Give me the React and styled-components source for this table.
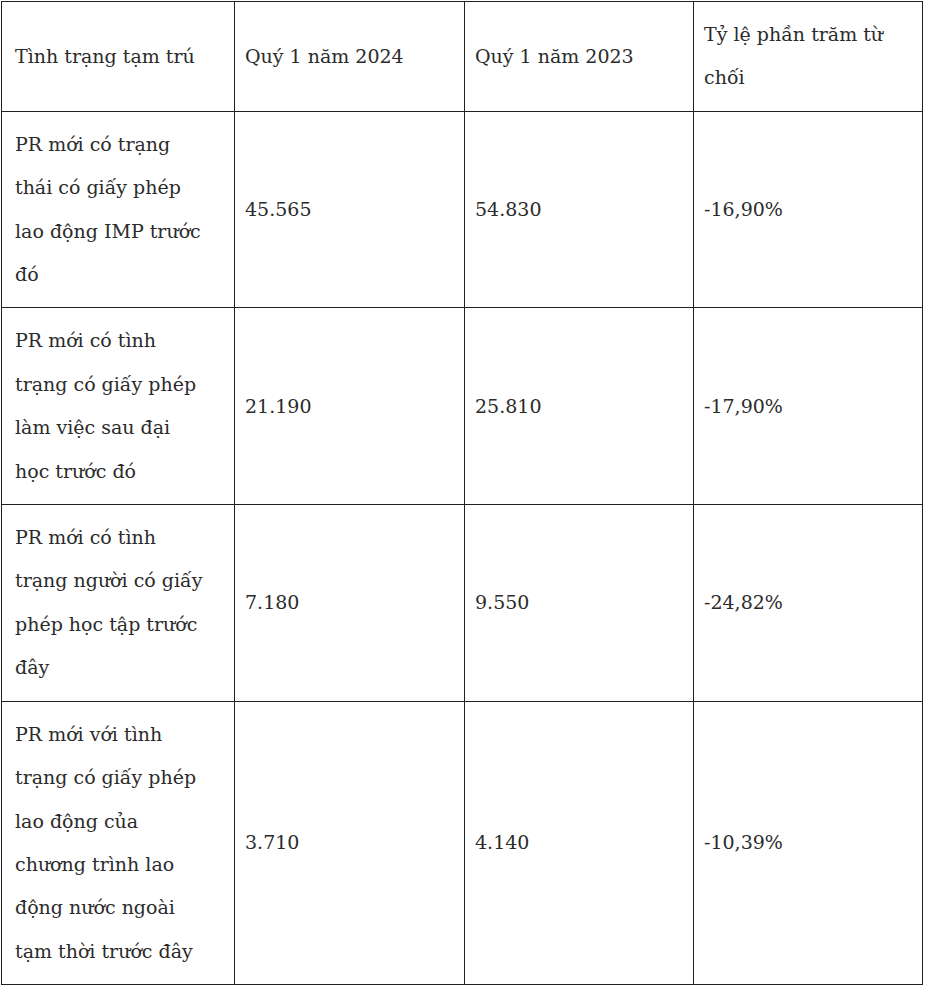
import React from 'react'
import { styled, createGlobalStyle } from 'styled-components'

const rows = [
  {
    status: ['PR mới có trạng', 'thái có giấy phép', 'lao động IMP trước', 'đó'],
    q2024: '45.565',
    q2023: '54.830',
    rate: '-16,90%',
  },
  {
    status: ['PR mới có tình', 'trạng có giấy phép', 'làm việc sau đại', 'học trước đó'],
    q2024: '21.190',
    q2023: '25.810',
    rate: '-17,90%',
  },
  {
    status: ['PR mới có tình', 'trạng người có giấy', 'phép học tập trước', 'đây'],
    q2024: '7.180',
    q2023: '9.550',
    rate: '-24,82%',
  },
  {
    status: [
      'PR mới với tình',
      'trạng có giấy phép',
      'lao động của',
      'chương trình lao',
      'động nước ngoài',
      'tạm thời trước đây',
    ],
    q2024: '3.710',
    q2023: '4.140',
    rate: '-10,39%',
  },
]

export default function App() {
  return (
    <>
      <GlobalStyle />
      <Page>
        <Table>
          <colgroup>
            <col style={{ width: 233 }} />
            <col style={{ width: 230 }} />
            <col style={{ width: 229 }} />
            <col style={{ width: 229 }} />
          </colgroup>
          <thead>
            <tr>
              <Cell $first>Tình trạng tạm trú</Cell>
              <Cell>Quý 1 năm 2024</Cell>
              <Cell>Quý 1 năm 2023</Cell>
              <Cell>
                Tỷ lệ phần trăm từ
                <br />
                chối
              </Cell>
            </tr>
          </thead>
          <tbody>
            {rows.map((r, i) => (
              <tr key={i}>
                <Cell $first>
                  {r.status.map((line, j) => (
                    <Line key={j}>{line}</Line>
                  ))}
                </Cell>
                <Cell>{r.q2024}</Cell>
                <Cell>{r.q2023}</Cell>
                <Cell>{r.rate}</Cell>
              </tr>
            ))}
          </tbody>
        </Table>
      </Page>
    </>
  )
}

const GlobalStyle = createGlobalStyle`
  html, body {
    margin: 0;
    padding: 0;
    background: #ffffff;
  }
`

const Page = styled.div`
  padding: 1px 0 0 1px;
  font-family: 'DejaVu Serif', 'Liberation Serif', serif;
  color: #2b2b2b;
`

const Table = styled.table`
  border-collapse: collapse;
  table-layout: fixed;
  width: 921px;
`

const Cell = styled.td`
  border: 1px solid #222;
  padding: 11px 10px 11px ${(p) => (p.$first ? '13px' : '10px')};
  font-size: 19px;
  line-height: 43.4px;
  vertical-align: middle;
  text-align: left;
  font-weight: 400;
`

const Line = styled.span`
  display: block;
  white-space: nowrap;
`
